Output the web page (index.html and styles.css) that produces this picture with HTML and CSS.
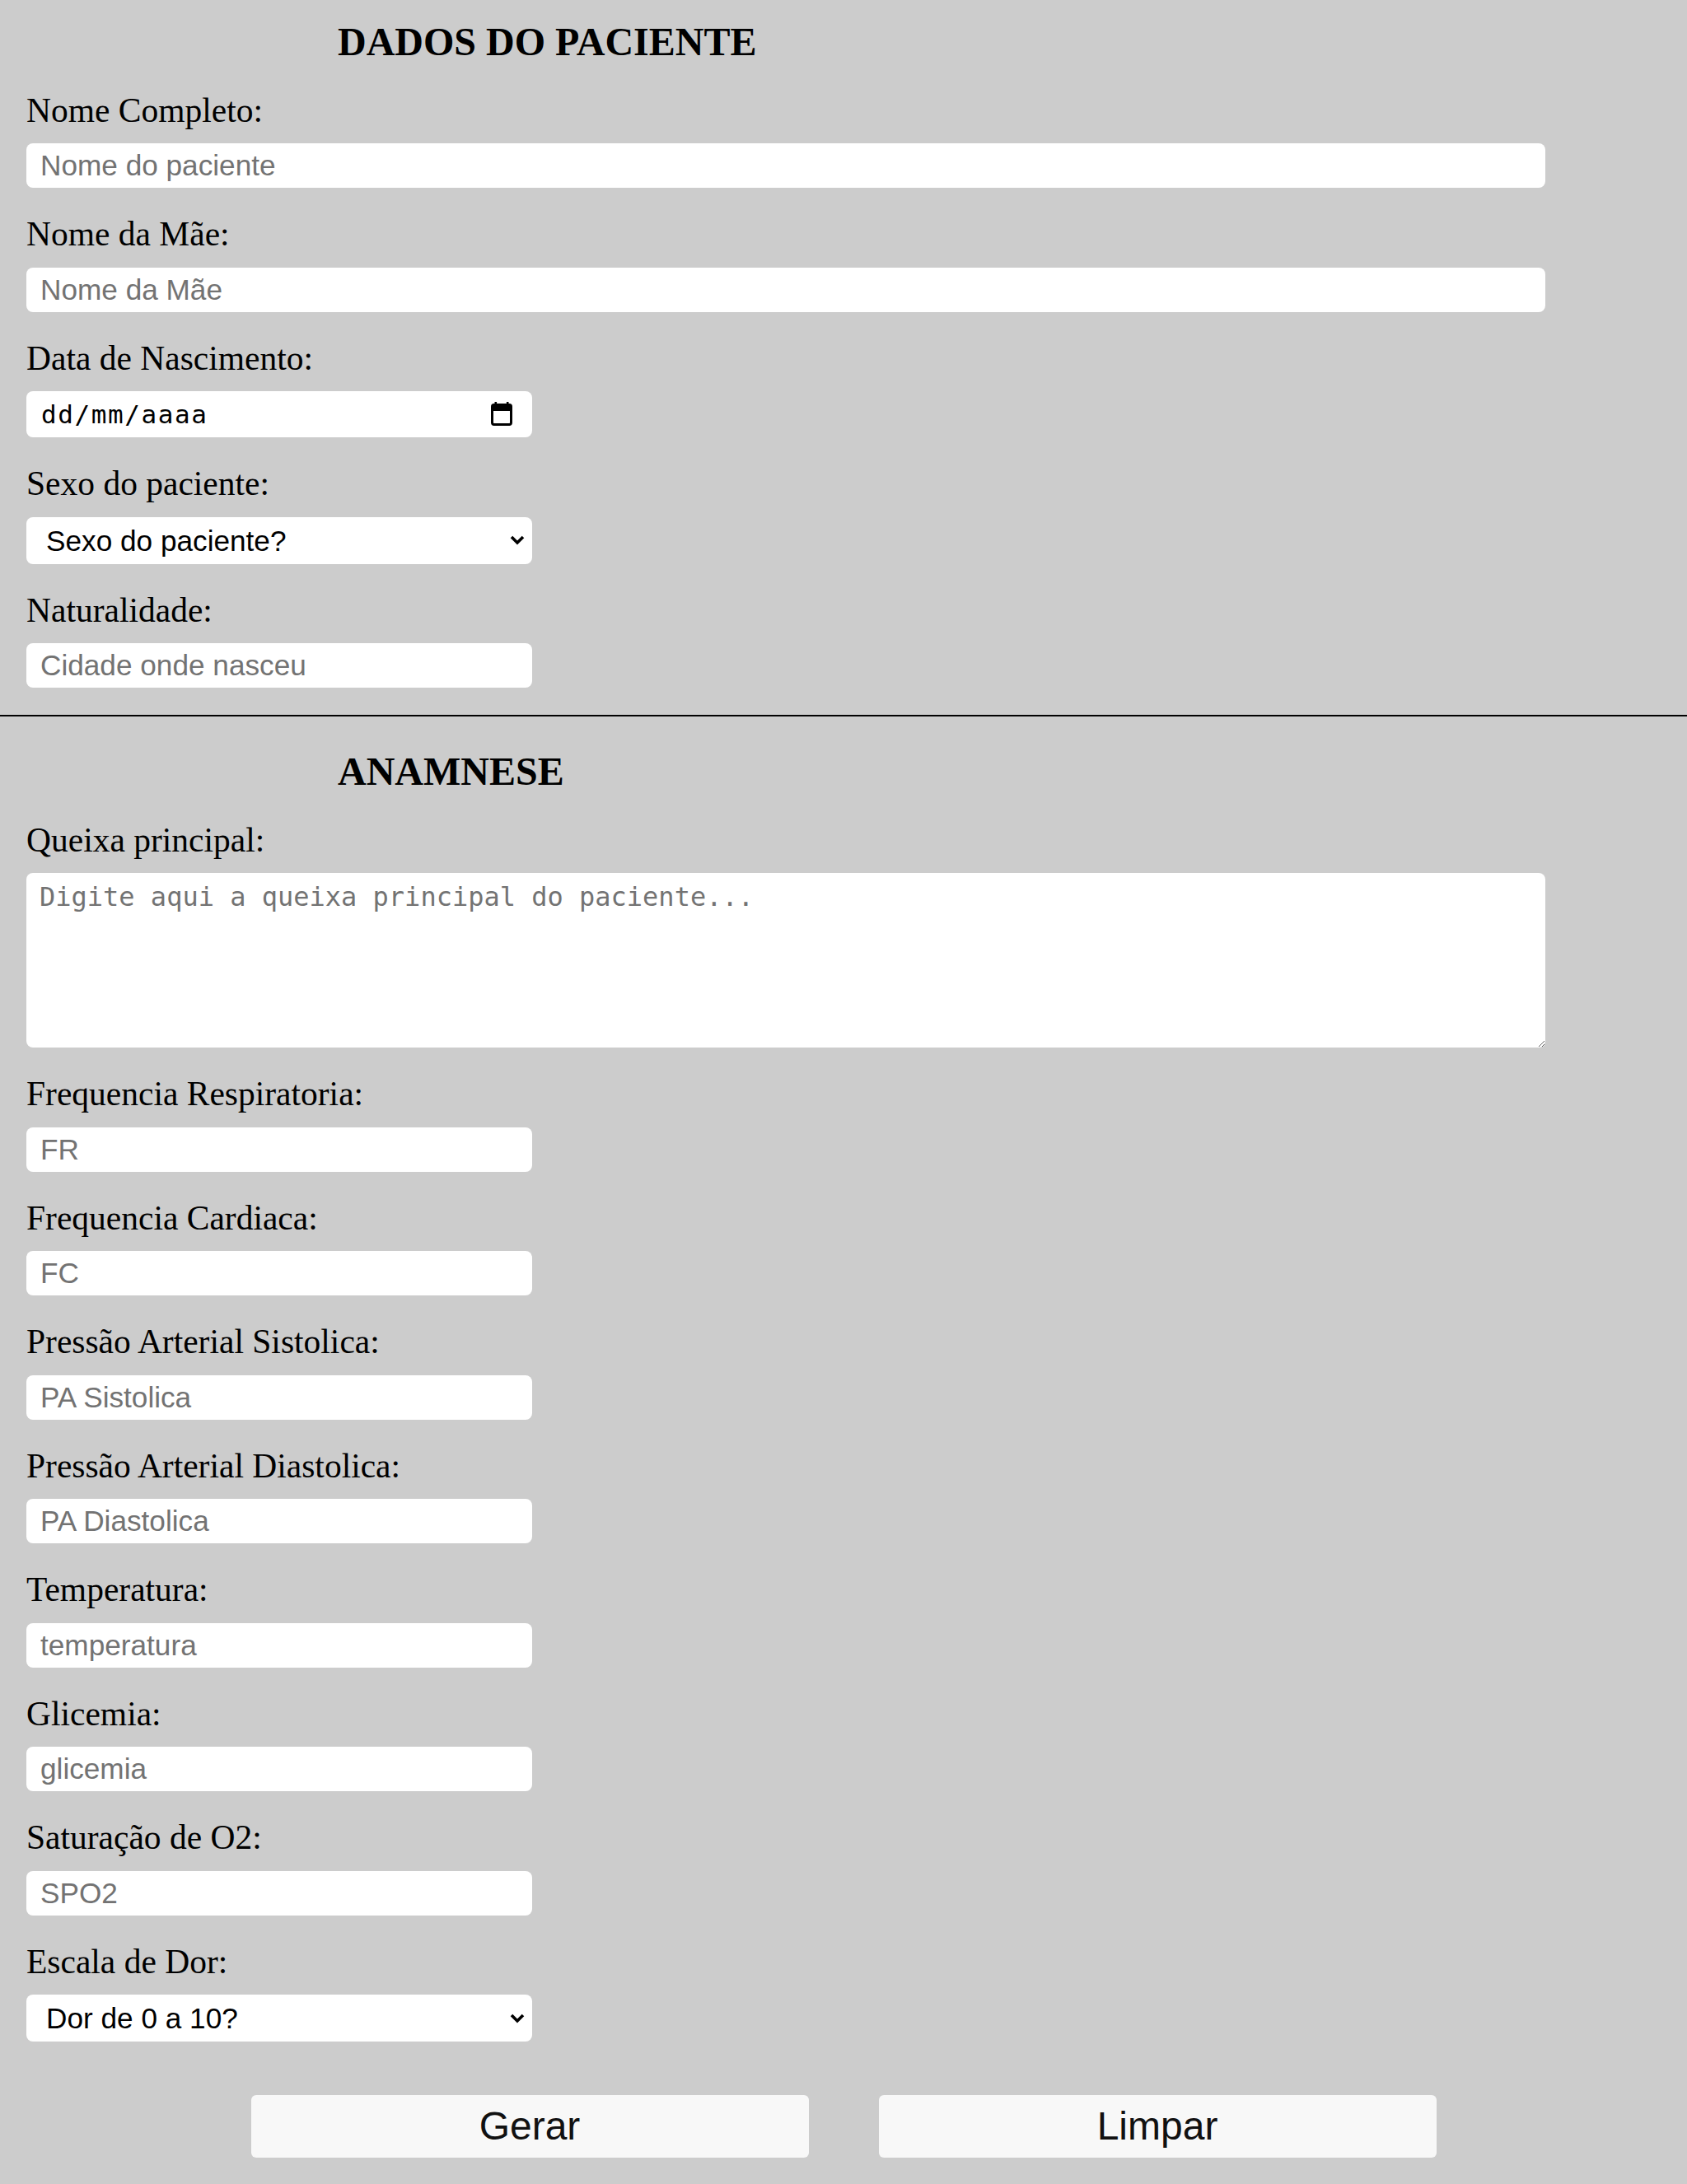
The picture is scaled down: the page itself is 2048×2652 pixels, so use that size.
FILE: index.html
```html
<!DOCTYPE html>
<html lang="pt-BR">
<head>
<meta charset="utf-8">
<title>Dados do Paciente</title>
<link rel="stylesheet" href="styles.css">
</head>
<body>
<main class="page">
  <section class="section section-first">
    <h2 class="title">DADOS DO PACIENTE</h2>
    <div class="field">
      <label class="label" for="nome">Nome Completo:</label>
      <input class="input input-wide" id="nome" type="text" placeholder="Nome do paciente">
    </div>
    <div class="field">
      <label class="label" for="mae">Nome da Mãe:</label>
      <input class="input input-wide" id="mae" type="text" placeholder="Nome da Mãe">
    </div>
    <div class="field">
      <label class="label">Data de Nascimento:</label>
      <div class="input input-narrow date">
        <span class="date-text">dd/mm/aaaa</span>
        <svg class="calendar" width="26" height="29" viewBox="0 0 26 29" aria-hidden="true">
          <rect x="4.5" y="0" width="2.6" height="5" fill="#000"/>
          <rect x="18.9" y="0" width="2.6" height="5" fill="#000"/>
          <rect x="1.5" y="3.5" width="23" height="24" rx="2.2" fill="none" stroke="#000" stroke-width="3"/>
          <rect x="1.5" y="3" width="23" height="8" fill="#000"/>
        </svg>
      </div>
    </div>
    <div class="field">
      <label class="label" for="sexo">Sexo do paciente:</label>
      <div class="select-wrap">
        <select class="select" id="sexo">
          <option>Sexo do paciente?</option>
          <option>Masculino</option>
          <option>Feminino</option>
        </select>
        <svg class="chevron" width="18" height="12" viewBox="0 0 18 12" aria-hidden="true">
          <polyline points="2,2 9,9 16,2" fill="none" stroke="#000" stroke-width="3.6"/>
        </svg>
      </div>
    </div>
    <div class="field">
      <label class="label" for="nat">Naturalidade:</label>
      <input class="input input-narrow" id="nat" type="text" placeholder="Cidade onde nasceu">
    </div>
  </section>

  <hr class="divider">

  <section class="section section-second">
    <h2 class="title">ANAMNESE</h2>
    <div class="field">
      <label class="label" for="queixa">Queixa principal:</label>
      <textarea class="textarea" id="queixa" placeholder="Digite aqui a queixa principal do paciente..."></textarea>
    </div>
    <div class="field">
      <label class="label" for="fr">Frequencia Respiratoria:</label>
      <input class="input input-narrow" id="fr" type="text" placeholder="FR">
    </div>
    <div class="field">
      <label class="label" for="fc">Frequencia Cardiaca:</label>
      <input class="input input-narrow" id="fc" type="text" placeholder="FC">
    </div>
    <div class="field">
      <label class="label" for="pas">Pressão Arterial Sistolica:</label>
      <input class="input input-narrow" id="pas" type="text" placeholder="PA Sistolica">
    </div>
    <div class="field">
      <label class="label" for="pad">Pressão Arterial Diastolica:</label>
      <input class="input input-narrow" id="pad" type="text" placeholder="PA Diastolica">
    </div>
    <div class="field">
      <label class="label" for="temp">Temperatura:</label>
      <input class="input input-narrow" id="temp" type="text" placeholder="temperatura">
    </div>
    <div class="field">
      <label class="label" for="glic">Glicemia:</label>
      <input class="input input-narrow" id="glic" type="text" placeholder="glicemia">
    </div>
    <div class="field">
      <label class="label" for="spo2">Saturação de O2:</label>
      <input class="input input-narrow" id="spo2" type="text" placeholder="SPO2">
    </div>
    <div class="field">
      <label class="label" for="dor">Escala de Dor:</label>
      <div class="select-wrap">
        <select class="select" id="dor">
          <option>Dor de 0 a 10?</option>
          <option>0</option><option>1</option><option>2</option><option>3</option>
          <option>4</option><option>5</option><option>6</option><option>7</option>
          <option>8</option><option>9</option><option>10</option>
        </select>
        <svg class="chevron" width="18" height="12" viewBox="0 0 18 12" aria-hidden="true">
          <polyline points="2,2 9,9 16,2" fill="none" stroke="#000" stroke-width="3.6"/>
        </svg>
      </div>
    </div>
  </section>

  <div class="actions">
    <button class="button" type="button">Gerar</button>
    <button class="button" type="button">Limpar</button>
  </div>
</main>
</body>
</html>
```

FILE: styles.css
```css
html, body {
  margin: 0;
  padding: 0;
  background: #cccccc;
}

body {
  font-family: "Liberation Serif", "Times New Roman", serif;
  color: #000;
}

.page {
  display: flex;
  flex-direction: column;
  padding-bottom: 30px;
}

.section {
  padding: 0 32px;
}

.section-first {
  padding-top: 22.5px;
}

.section-second {
  padding-top: 39px;
}

.title {
  margin: 0 0 0 378px;
  font-family: "Liberation Serif", "Times New Roman", serif;
  font-weight: bold;
  font-size: 48px;
  line-height: 55px;
}

.field {
  margin-top: 33px;
}

.label {
  display: block;
  font-size: 41.5px;
  line-height: 46px;
  margin-bottom: 17.5px;
}

.input {
  display: block;
  box-sizing: border-box;
  height: 54px;
  border: 0;
  border-radius: 8px;
  background: #fff;
  padding: 0 16px 0 17px;
  margin: 0;
  font-family: "Liberation Sans", Arial, sans-serif;
  font-size: 35.2px;
  color: #000;
  outline: none;
}

.input::placeholder {
  color: #737373;
}

.input-wide {
  width: 1844px;
}

.input-narrow {
  width: 614px;
}

.date {
  height: 56px;
  display: flex;
  align-items: center;
  justify-content: space-between;
  padding: 0 24px 0 18px;
}

.date-text {
  font-family: "DejaVu Sans Mono", "Liberation Mono", monospace;
  font-size: 31px;
  letter-spacing: 1.6px;
  color: #000;
}

.calendar {
  display: block;
  margin-top: -2px;
}

.select-wrap {
  position: relative;
  width: 614px;
}

.select {
  display: block;
  box-sizing: border-box;
  width: 614px;
  height: 57px;
  -webkit-appearance: none;
  appearance: none;
  border: 0;
  border-radius: 8px;
  background: #fff;
  padding: 0 40px 0 24px;
  margin: 0;
  font-family: "Liberation Sans", Arial, sans-serif;
  font-size: 35.2px;
  color: #000;
  outline: none;
}

.chevron {
  position: absolute;
  right: 9px;
  top: 50%;
  margin-top: -6px;
  pointer-events: none;
}

.textarea {
  display: block;
  box-sizing: border-box;
  width: 1844px;
  height: 212px;
  border: 0;
  border-radius: 8px;
  background: #fff;
  padding: 10px 16px;
  margin: 0;
  font-family: "DejaVu Sans Mono", "Liberation Mono", monospace;
  font-size: 32px;
  color: #000;
  outline: none;
}

.textarea::placeholder {
  color: #737373;
}

.divider {
  margin: 32.5px 0 0;
  border: 0;
  border-top: 2px solid #000;
  height: 0;
}

.actions {
  display: flex;
  justify-content: center;
  gap: 85px;
  margin-top: 65px;
}

.button {
  width: 677px;
  height: 75.5px;
  border: 0;
  border-radius: 6px;
  background: #f8f8f8;
  font-family: "Liberation Sans", Arial, sans-serif;
  font-size: 48px;
  color: #111;
  padding: 0;
}
```
